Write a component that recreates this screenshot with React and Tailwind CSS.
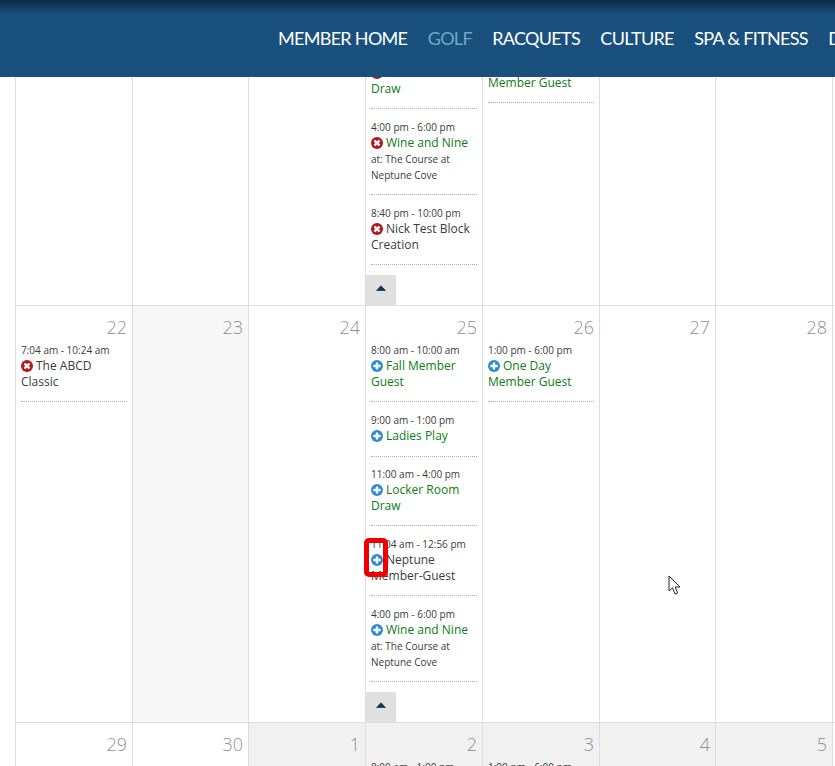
import React from "react";

const navItems = ["MEMBER HOME", "GOLF", "RACQUETS", "CULTURE", "SPA & FITNESS", "DINING"];

function StatusIcon({ type }) {
  const add = type === "add";
  return (
    <svg
      className="inline-block mr-[3px] align-[-1.5px]"
      width="12"
      height="12"
      viewBox="0 0 12 12"
    >
      <circle cx="6" cy="6" r="6" fill={add ? "#2f8ad6" : "#b3151b"} />
      <g transform={add ? undefined : "rotate(45 6 6)"}>
        <rect x="2.4" y="4.8" width="7.2" height="2.4" rx="0.5" fill="#ffffff" />
        <rect x="4.8" y="2.4" width="2.4" height="7.2" rx="0.5" fill="#ffffff" />
      </g>
    </svg>
  );
}

function Event({ time, title, green, type, at, tight }) {
  return (
    <div className={`border-b border-dotted border-[#aaaaaa] pt-[10px] ${tight ? "pb-[12px] -mb-[1px]" : "pb-[11px]"}`}>
      <div className="text-[10px] leading-[16px] text-[#3a3a3a]">{time}</div>
      <div className={`text-[12px] leading-[16px] ${green ? "text-[#0a7d12]" : "text-[#3a3a3a]"}`}>
        <StatusIcon type={type} />
        {title}
      </div>
      {at && <div className="text-[10px] leading-[16px] text-[#3a3a3a]">at: {at}</div>}
    </div>
  );
}

function UpButton() {
  return (
    <div className="mt-auto -ml-[5px] w-[30px] h-[30px] bg-[#e0e0e0] flex items-start justify-center pt-[10px] shrink-0">
      <svg width="10" height="6" viewBox="0 0 10 6">
        <path d="M5 0.8 L9.4 5.4 L0.6 5.4 Z" fill="#0f3557" stroke="#0f3557" strokeWidth="0.8" strokeLinejoin="round" />
      </svg>
    </div>
  );
}

function Cell({ day, bg = "bg-white", last, children }) {
  return (
    <div className={`flex flex-col border-l border-[#dddddd] pl-[5px] pr-[5px] overflow-hidden ${last ? "border-r" : ""} ${bg}`}>
      <div className="h-[26px] shrink-0 pt-[8px] text-right text-[18px] font-light leading-[26px] text-[#8f8f8f]">{day}</div>
      {children}
    </div>
  );
}

function Row({ className, children }) {
  return (
    <div className={`grid grid-cols-[117px_116px_117px_117px_117px_116px_118px] border-b border-[#dddddd] ${className}`}>
      {children}
    </div>
  );
}

export default function App() {
  return (
    <div
      className="relative w-[835px] h-[766px] overflow-hidden bg-white"
      style={{ fontFamily: '"Open Sans", sans-serif' }}
    >
      <header className="absolute top-0 left-0 right-0 z-10 h-[77px] bg-gradient-to-b from-[#0f2c43] via-[#19507d] via-[18%] to-[#19507d] overflow-hidden">
        <nav
          className="flex gap-[20.4px] pl-[278px] pt-[25px] text-[18px] leading-[26px] whitespace-nowrap tracking-[-0.7px]"
          style={{ fontFamily: 'Lato, sans-serif' }}
        >
          {navItems.map((n) => (
            <span key={n} className={n === "GOLF" ? "text-[#6fa8c7]" : "text-white"}>{n}</span>
          ))}
        </nav>
      </header>

      <main className="pt-[6px] pl-[15px]">
        <Row className="h-[300px]">
          <Cell day="15" />
          <Cell day="16" />
          <Cell day="17" />
          <Cell day="18">
            <div className="mt-[7px]">
              <Event time="11:00 am - 4:00 pm" title="Locker Room Draw" green type="remove" />
            </div>
            <Event time="4:00 pm - 6:00 pm" title="Wine and Nine" green type="remove" at="The Course at Neptune Cove" />
            <Event time="8:40 pm - 10:00 pm" title="Nick Test Block Creation" type="remove" />
            <UpButton />
          </Cell>
          <Cell day="19">
            <div className="mt-[1px]">
              <Event time="1:00 pm - 6:00 pm" title="One Day Member Guest" green type="add" />
            </div>
          </Cell>
          <Cell day="20" />
          <Cell day="21" last />
        </Row>
        <Row className="h-[417px]">
          <Cell day="22">
            <Event time="7:04 am - 10:24 am" title="The ABCD Classic" type="remove" />
          </Cell>
          <Cell day="23" bg="bg-[#f7f7f7]" />
          <Cell day="24" />
          <Cell day="25">
            <Event time="8:00 am - 10:00 am" title="Fall Member Guest" green type="add" />
            <Event time="9:00 am - 1:00 pm" title="Ladies Play" green type="add" tight />
            <Event time="11:00 am - 4:00 pm" title="Locker Room Draw" green type="add" />
            <Event time="11:04 am - 12:56 pm" title="Neptune Member-Guest" type="add" />
            <Event time="4:00 pm - 6:00 pm" title="Wine and Nine" green type="add" at="The Course at Neptune Cove" />
            <UpButton />
          </Cell>
          <Cell day="26">
            <Event time="1:00 pm - 6:00 pm" title="One Day Member Guest" green type="add" />
          </Cell>
          <Cell day="27" />
          <Cell day="28" last />
        </Row>
        <div className="grid grid-cols-[117px_116px_117px_117px_117px_116px_118px] h-[60px]">
          <Cell day="29" />
          <Cell day="30" />
          <Cell day="1" bg="bg-[#f1f1f1]" />
          <Cell day="2" bg="bg-[#f1f1f1]">
            <Event time="8:00 am - 1:00 pm" title="Fall" green type="add" />
          </Cell>
          <Cell day="3" bg="bg-[#f1f1f1]">
            <Event time="1:00 pm - 6:00 pm" title="One" green type="add" />
          </Cell>
          <Cell day="4" bg="bg-[#f1f1f1]" />
          <Cell day="5" bg="bg-[#f1f1f1]" last />
        </div>
      </main>

      <div className="absolute left-[364px] top-[538px] w-[24px] h-[39px] border-[5px] border-[#ee0000] rounded-[5px] z-20" />

      <svg className="absolute left-[668px] top-[575px] z-20" width="14" height="21" viewBox="0 0 14 21">
        <path d="M1 1 L1 16 L4.5 12.8 L7 19 L9.6 18 L7.2 12 L12 12 Z" fill="#ffffff" stroke="#222222" strokeWidth="1" strokeLinejoin="round" />
      </svg>
    </div>
  );
}
